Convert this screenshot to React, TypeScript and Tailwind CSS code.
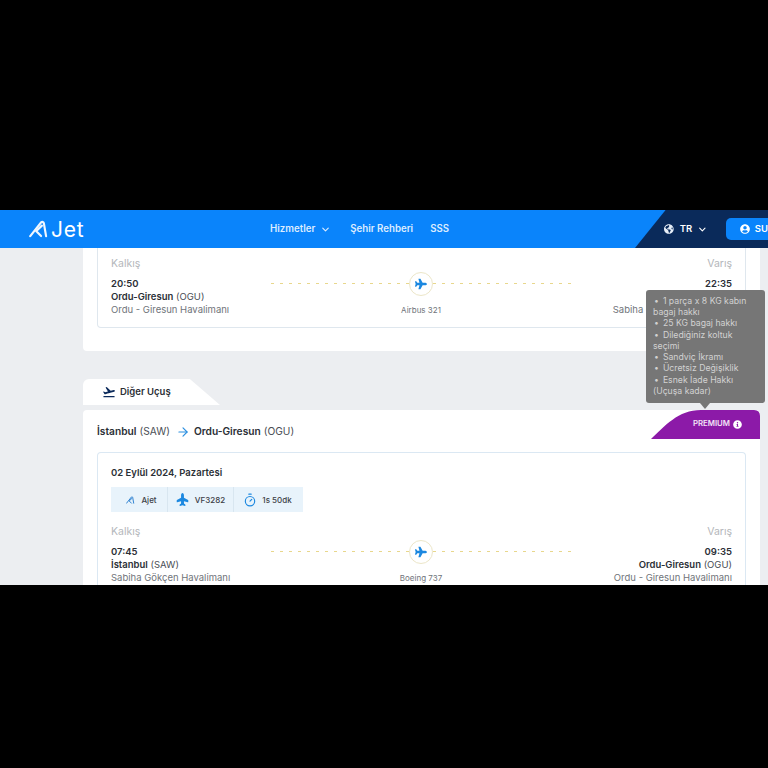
import React from 'react';
import { ArrowRight, ChevronDown, Timer } from 'lucide-react';
import { FaGlobeAmericas, FaInfoCircle, FaPlane, FaUserCircle } from 'react-icons/fa';
import { MdFlightTakeoff } from 'react-icons/md';

const AMark = ({ className }: { className: string }) => (
  <svg viewBox="0 0 24 20" className={className} fill="none" stroke="currentColor" strokeWidth="2.6" strokeLinejoin="round" strokeLinecap="round">
    <path d="M1.5 18.5 L14.5 2 C16 0.8 17.5 1.5 17.8 3 L20.5 18.5" />
    <path d="M15.5 6 L8.5 12.5 L14.5 18.5" />
  </svg>
);

interface Stop {
  time: string;
  city: string;
  code: string;
  airport: string;
}

const FlightRow = ({ from, to, aircraft }: { from: Stop; to: Stop; aircraft: string }) => (
  <>
    <div className="flex justify-between text-[10.5px] leading-[14px] text-[#b4b7bb]">
      <span>Kalkış</span>
      <span>Varış</span>
    </div>
    <div className="mt-[6px] flex">
      <div className="w-[160px] text-[9.5px] leading-[13px] text-[#4a4e55]">
        <div className="font-semibold text-[#2b2f36]">{from.time}</div>
        <div><span className="font-semibold text-[#2b2f36]">{from.city}</span> ({from.code})</div>
        <div className="text-[#70747a] whitespace-nowrap">{from.airport}</div>
      </div>
      <div className="flex w-[303px] flex-col items-center">
        <div className="relative flex h-[13px] w-full items-center">
          <div className="h-px w-full bg-[repeating-linear-gradient(90deg,#e8d78c_0,#e8d78c_3px,transparent_3px,transparent_9px)]" />
          <div className="absolute left-[138px] flex h-[24px] w-[24px] items-center justify-center rounded-full border border-[#ece6c8] bg-white">
            <FaPlane className="h-[12px] w-[12px] text-[#1c88e0]" />
          </div>
        </div>
        <div className="mt-[14px] pr-[3px] text-[8px] leading-[13px] text-[#70747a]">{aircraft}</div>
      </div>
      <div className="flex-1 text-right text-[9.5px] leading-[13px] text-[#4a4e55]">
        <div className="font-semibold text-[#2b2f36]">{to.time}</div>
        <div><span className="font-semibold text-[#2b2f36]">{to.city}</span> ({to.code})</div>
        <div className="text-[#70747a] whitespace-nowrap">{to.airport}</div>
      </div>
    </div>
  </>
);

const Tooltip = () => (
  <div className="absolute bottom-[36px] right-[-5px] z-10 w-[119px] rounded-[3px] bg-[#767676] py-[6px] pl-[7px] pr-[15px] text-[8.7px] leading-[11.25px] text-[#d2d2d2]">
    {['1 parça x 8 KG kabın bagaj hakkı', '25 KG bagaj hakkı', 'Dilediğiniz koltuk seçimi', 'Sandviç İkramı', 'Ücretsiz Değişiklik', 'Esnek İade Hakkı (Uçuşa kadar)'].map((item) => (
      <div key={item}><span className="ml-[1px] mr-[4px]">•</span>{item}</div>
    ))}
    <div className="absolute bottom-[-6px] left-[54px] h-0 w-0 border-x-[5px] border-t-[6px] border-x-transparent border-t-[#767676]" />
  </div>
);

export default function App() {
  return (
    <div className="flex h-[768px] flex-col overflow-hidden bg-black font-['Inter','Liberation_Sans',sans-serif]">
      <div className="h-[210px] shrink-0" />
      <div className="flex h-[375px] shrink-0 flex-col overflow-hidden bg-[#eceef1]">
        <header className="flex h-[38px] shrink-0 items-center bg-[#0a84fb] text-white">
          <div className="ml-[29px] flex w-[241px] items-center">
            <AMark className="h-[18px] w-[20px] text-[#f0f7ff]" />
            <span className="ml-[2px] text-[21px] font-normal leading-none tracking-[0.8px]">Jet</span>
          </div>
          <nav className="flex items-center pt-[1px] text-[9.7px] font-semibold text-[#dcecff]">
            <span>Hizmetler</span>
            <ChevronDown className="ml-[5px] h-[11px] w-[11px]" strokeWidth={2.5} />
            <span className="ml-[19px]">Şehir Rehberi</span>
            <span className="ml-[17px]">SSS</span>
          </nav>
          <div className="ml-auto flex h-full w-[133px] items-center bg-[#0a2a5a] pl-[28px] [clip-path:polygon(23%_0,100%_0,100%_100%,0_100%)]">
            <FaGlobeAmericas className="ml-[1px] h-[10px] w-[10px] text-[#e6eef8]" />
            <span className="ml-[6px] text-[9.5px] font-semibold">TR</span>
            <ChevronDown className="ml-[5px] h-[11px] w-[11px]" strokeWidth={2.5} />
            <div className="ml-[18px] flex h-[22px] flex-1 items-center rounded-l-[5px] bg-[#0a84fb] pl-[14px]">
              <FaUserCircle className="h-[10px] w-[10px]" />
              <span className="ml-[5px] text-[9.5px] font-semibold">SU</span>
            </div>
          </div>
        </header>

        <main className="flex-1 pl-[83px] pr-[8px]">
          <section className="h-[103px] rounded-b-[4px] bg-white px-[14px]">
            <div className="h-[80px] rounded-b-[4px] border-x border-b border-[#dfe7ee] px-[13px] pt-[9px]">
              <FlightRow
                from={{ time: '20:50', city: 'Ordu-Giresun', code: 'OGU', airport: 'Ordu - Giresun Havalimanı' }}
                to={{ time: '22:35', city: 'İstanbul', code: 'SAW', airport: 'Sabiha Gökçen Havalimanı' }}
                aircraft="Airbus 321"
              />
            </div>
          </section>

          <div className="mt-[28px] flex h-[26px] w-[137px] items-center rounded-tl-[6px] bg-white pl-[19px] [clip-path:polygon(0_0,78%_0,100%_100%,0_100%)]">
            <MdFlightTakeoff className="h-[14px] w-[14px] text-[#0b2a5b]" />
            <span className="ml-[4px] text-[9.5px] font-semibold text-[#2b2f36]">Diğer Uçuş</span>
          </div>

          <section className="mt-[5px] rounded-t-[4px] bg-white px-[14px]">
            <div className="relative flex h-[42px] items-center pt-[1px] text-[10.2px] text-[#4a4e55]">
              <span className="font-semibold text-[#2b2f36]">İstanbul</span>
              <span className="ml-[3px]">(SAW)</span>
              <ArrowRight className="ml-[6px] mr-[4px] h-[14px] w-[14px] text-[#2b8fe0]" />
              <span className="font-semibold text-[#2b2f36]">Ordu-Giresun</span>
              <span className="ml-[3px]">(OGU)</span>
              <div className="absolute right-[-14px] top-0 h-[29px] w-[109px]">
                <Tooltip />
                <div className="flex h-full items-center justify-end bg-[#8c1aa8] pb-[1px] pr-[18px] [clip-path:path('M0_29C14_16_27_0_50_0L103_0Q109_0_109_6L109_29Z')]">
                  <span className="text-[7.8px] font-semibold text-[#f3e2f7]">PREMIUM</span>
                  <FaInfoCircle className="ml-[3px] h-[9px] w-[9px] text-white" />
                </div>
              </div>
            </div>
            <div className="h-[140px] rounded-t-[4px] border-x border-t border-[#dbe8f3] px-[13px] pt-[13px]">
              <div className="text-[9.5px] font-semibold leading-[13px] text-[#2b2f36]">02 Eylül 2024, Pazartesi</div>
              <div className="mt-[8px] flex h-[25px] w-[192px] items-center bg-[#e8f3fb] text-[8px] font-medium text-[#3c4047]">
                <div className="flex h-full w-[57px] items-center justify-center border-r border-[#d8e6f0] pl-[5px]">
                  <AMark className="h-[8px] w-[9px] text-[#2b7fd0]" />
                  <span className="ml-[6px]">Ajet</span>
                </div>
                <div className="flex h-full w-[66px] items-center justify-center border-r border-[#d8e6f0]">
                  <FaPlane className="h-[13px] w-[13px] -rotate-90 text-[#1c88e0]" />
                  <span className="ml-[6px]">VF3282</span>
                </div>
                <div className="flex h-full flex-1 items-center justify-center pr-[2px]">
                  <Timer className="h-[14px] w-[14px] text-[#1c88e0]" />
                  <span className="ml-[5px]">1s 50dk</span>
                </div>
              </div>
              <div className="mt-[13px]">
                <FlightRow
                  from={{ time: '07:45', city: 'İstanbul', code: 'SAW', airport: 'Sabiha Gökçen Havalimanı' }}
                  to={{ time: '09:35', city: 'Ordu-Giresun', code: 'OGU', airport: 'Ordu - Giresun Havalimanı' }}
                  aircraft="Boeing 737"
                />
              </div>
            </div>
          </section>
        </main>
      </div>
      <div className="flex-1" />
    </div>
  );
}
